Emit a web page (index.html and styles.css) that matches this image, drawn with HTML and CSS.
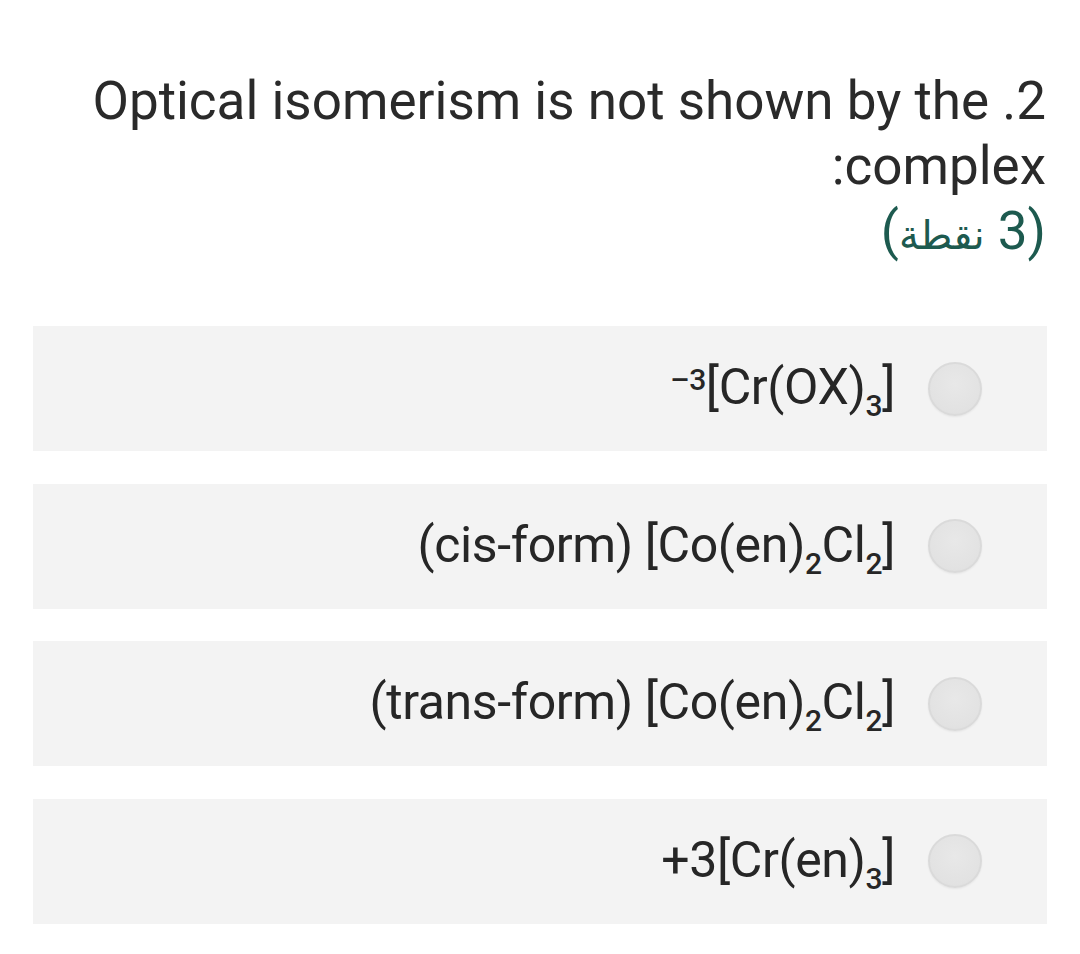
FILE: index.html
```html
<!DOCTYPE html>
<html lang="ar" dir="rtl">
<head>
<meta charset="utf-8">
<title>Question</title>
<link rel="stylesheet" href="styles.css">
</head>
<body>
<div class="form">
  <div class="question">
    <div class="title">2. Optical isomerism is not shown by the complex:</div>
    <div class="points">(3 <span class="ar">نقطة</span>)</div>
  </div>
  <div class="options">
    <label class="option">
      <span class="radio"></span>
      <span class="text" dir="ltr"><span class="sup">–3</span>[Cr(OX)<span class="sub">3</span>]</span>
    </label>
    <label class="option">
      <span class="radio"></span>
      <span class="text" dir="ltr">(cis-form) [Co(en)<span class="sub">2</span>Cl<span class="sub">2</span>]</span>
    </label>
    <label class="option">
      <span class="radio"></span>
      <span class="text" dir="ltr">(trans-form) [Co(en)<span class="sub">2</span>Cl<span class="sub">2</span>]</span>
    </label>
    <label class="option">
      <span class="radio"></span>
      <span class="text" dir="ltr">+3[Cr(en)<span class="sub">3</span>]</span>
    </label>
  </div>
</div>
</body>
</html>
```

FILE: styles.css
```css
html, body {
  margin: 0;
  padding: 0;
  background: #ffffff;
}

body {
  font-family: Roboto, "Noto Sans", "Liberation Sans", sans-serif;
  color: #262626;
}

.form {
  padding: 69px 33px 0 33px;
}

.question {
  font-size: 53px;
  line-height: 65px;
  padding-right: 1px;
}

.title {
  color: #2a2a2a;
}

.points {
  color: #1d5a4f;
  height: 65px;
}

.ar {
  font-size: 40px;
  line-height: 40px;
  font-family: "Noto Sans", "DejaVu Sans", sans-serif;
}

.options {
  margin-top: 62px;
  display: flex;
  flex-direction: column;
  gap: 32.5px;
}

.option {
  height: 125px;
  background: #f3f3f3;
  display: flex;
  align-items: center;
  padding-right: 65px;
  gap: 33px;
}

.radio {
  flex: none;
  width: 54px;
  height: 54px;
  border-radius: 50%;
  box-sizing: border-box;
  border: 2px solid #dadada;
  background: radial-gradient(circle at 50% 40%, #e8e8e8 0%, #e2e2e2 70%, #dcdcdc 100%);
  box-shadow: 0 1px 2px rgba(0,0,0,0.06);
}

.text {
  font-size: 50px;
  letter-spacing: -0.4px;
  line-height: 60px;
  color: #262626;
  white-space: nowrap;
  position: relative;
  top: 2px;
}

.sub {
  font-size: 30px;
  font-weight: 500;
  position: relative;
  top: 12px;
}

.sup {
  font-size: 30px;
  font-weight: 500;
  position: relative;
  top: -14px;
}
```
